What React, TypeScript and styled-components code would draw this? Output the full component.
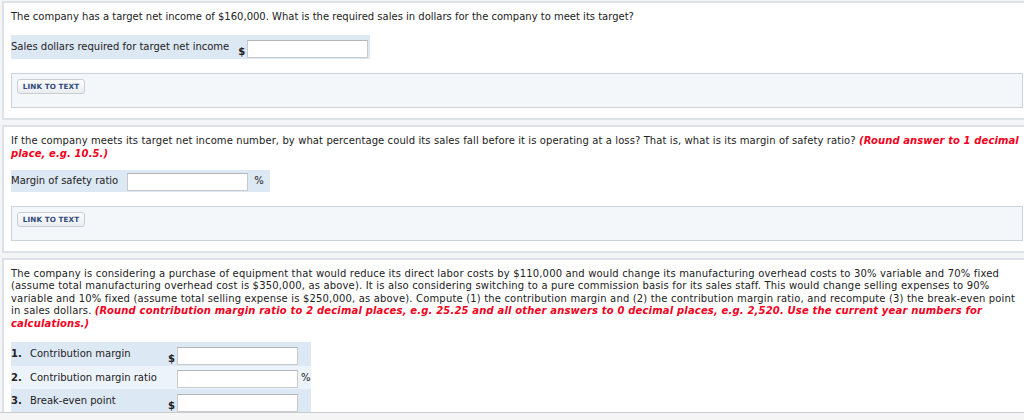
import React from 'react';
import styled, { createGlobalStyle } from 'styled-components';

const GlobalStyle = createGlobalStyle`
  html, body {
    margin: 0;
    padding: 0;
    background: #f3f5f7;
    overflow: hidden;
  }
  body {
    font-family: "DejaVu Sans", Verdana, sans-serif;
    color: #222;
  }
`;

const App: React.FC = () => {
    return (<>
        <GlobalStyle/>
        <Page>
            <Section>
                <Prompt>
                    The company has a target net income of $160,000. What is the required sales in dollars for the company to meet its target?
                </Prompt>
                <AnswerRow>
                    <Label>Sales dollars required for target net income</Label>
                    <Unit>$</Unit>
                    <Field type="text"/>
                </AnswerRow>
                <LinkBox>
                    <LinkButton>LINK TO TEXT</LinkButton>
                </LinkBox>
            </Section>

            <Section>
                <Prompt $spread={0.1}>
                    If the company meets its target net income number, by what percentage could its sales fall before it is operating at a loss? That is, what is its margin of safety ratio? <Hint>(Round answer to 1 decimal<br/>place, e.g. 10.5.)</Hint>
                </Prompt>
                <AnswerRow $tight>
                    <Label>Margin of safety ratio</Label>
                    <Field type="text"/>
                    <Percent>%</Percent>
                </AnswerRow>
                <LinkBox>
                    <LinkButton>LINK TO TEXT</LinkButton>
                </LinkBox>
            </Section>

            <Section>
                <Prompt $spread={0.17}>
                    The company is considering a purchase of equipment that would reduce its direct labor costs by $110,000 and would change its manufacturing overhead costs to 30% variable and 70% fixed<br/>
                    (assume total manufacturing overhead cost is $350,000, as above). It is also considering switching to a pure commission basis for its sales staff. This would change selling expenses to 90%<br/>
                    variable and 10% fixed (assume total selling expense is $250,000, as above). Compute (1) the contribution margin and (2) the contribution margin ratio, and recompute (3) the break-even point<br/>
                    in sales dollars. <Hint>(Round contribution margin ratio to 2 decimal places, e.g. 25.25 and all other answers to 0 decimal places, e.g. 2,520. Use the current year numbers for<br/>calculations.)</Hint>
                </Prompt>
                <Table>
                    {rows.map((row, index) => (
                        <TableRow key={row.label} $alt={index % 2 === 1}>
                            <Num>{index + 1}.</Num>
                            <RowLabel>{row.label}</RowLabel>
                            <Dollar>{row.unit === '$' ? '$' : ''}</Dollar>
                            <Field type="text"/>
                            <Pct>{row.unit === '%' ? '%' : ''}</Pct>
                        </TableRow>
                    ))}
                </Table>
            </Section>
        </Page>
        <FooterBar/>
    </>);
};

const rows = [
    { label: 'Contribution margin', unit: '$' },
    { label: 'Contribution margin ratio', unit: '%' },
    { label: 'Break-even point', unit: '$' },
];

export default App;

// Styled Components
const Page = styled.div`
  width: 1034px;
  padding: 1px 0 0 2px;
  display: flex;
  flex-direction: column;
  gap: 5px;
`;

const Section = styled.div`
  display: flex;
  flex-direction: column;
  align-items: flex-start;
  background: #fff;
  border: 2px solid #dde2e8;
  padding: 8px 9px 10px 7px;
`;

const Prompt = styled.div<{ $spread?: number }>`
  font-size: 10px;
  line-height: 12.5px;
  letter-spacing: ${p => p.$spread ?? 0}px;
  color: #222;
  white-space: nowrap;
`;

const Hint = styled.span`
  color: #f2001b;
  font-weight: bold;
  font-style: italic;
`;

const AnswerRow = styled.div<{ $tight?: boolean }>`
  display: flex;
  align-items: ${p => p.$tight ? 'center' : 'stretch'};
  margin-top: ${p => p.$tight ? '9.5px' : '11.5px'};
  background: #dde8f5;
  height: ${p => p.$tight ? '22px' : '24px'};
  padding-right: 2px;
`;

const Label = styled.span`
  font-size: 10px;
  line-height: 12px;
  align-self: center;
  padding-right: 9px;
`;

const Unit = styled.span`
  font-size: 10px;
  font-weight: bold;
  align-self: flex-end;
  line-height: 12px;
  padding: 0 2px 0 0;
  margin-bottom: 1px;
`;

const Field = styled.input`
  box-sizing: border-box;
  width: 121px;
  height: 18px;
  margin: 0;
  padding: 0 3px;
  border: 1px solid #c9c9c9;
  border-top-color: #b5b5b5;
  background: #fff;
  font-size: 10px;
  align-self: flex-end;
  margin-bottom: 1px;
  outline: none;
`;

const Percent = styled.span`
  font-size: 10px;
  padding: 0 4px 0 6px;
`;

const LinkBox = styled.div`
  align-self: stretch;
  display: flex;
  align-items: flex-start;
  margin-top: 14px;
  background: #f4f7fa;
  border: 1px solid #cbd3dc;
  padding: 5px 5px 13px;
  margin-right: 2px;
`;

const LinkButton = styled.button`
  box-sizing: border-box;
  height: 15px;
  width: 68px;
  padding: 0;
  border: 1px solid #c9ced5;
  border-radius: 3px;
  background: linear-gradient(#fdfdfe, #eaedf0);
  color: #2f4a7c;
  font-family: "DejaVu Sans", Verdana, sans-serif;
  font-weight: bold;
  font-size: 7.2px;
  letter-spacing: 0.1px;
  line-height: 13px;
  cursor: pointer;
`;

const Table = styled.div`
  margin-top: 12px;
  width: 300px;
  display: flex;
  flex-direction: column;
`;

const TableRow = styled.div<{ $alt: boolean }>`
  display: grid;
  grid-template-columns: 19px 138px 9px 121px 13px;
  align-items: center;
  height: 23.5px;
  background: ${p => p.$alt ? '#edf3fb' : '#dde8f5'};
  font-size: 10px;
`;

const Num = styled.span`
  font-weight: bold;
  align-self: center;
`;

const RowLabel = styled.span`
  align-self: center;
`;

const Dollar = styled.span`
  font-weight: bold;
  align-self: end;
  margin-bottom: 2px;
`;

const Pct = styled.span`
  padding-left: 3px;
`;

const FooterBar = styled.div`
  position: fixed;
  left: 0;
  right: 0;
  bottom: 0;
  height: 7px;
  background: #f5f5f5;
  border-top: 1px solid #c8ccd0;
`;
